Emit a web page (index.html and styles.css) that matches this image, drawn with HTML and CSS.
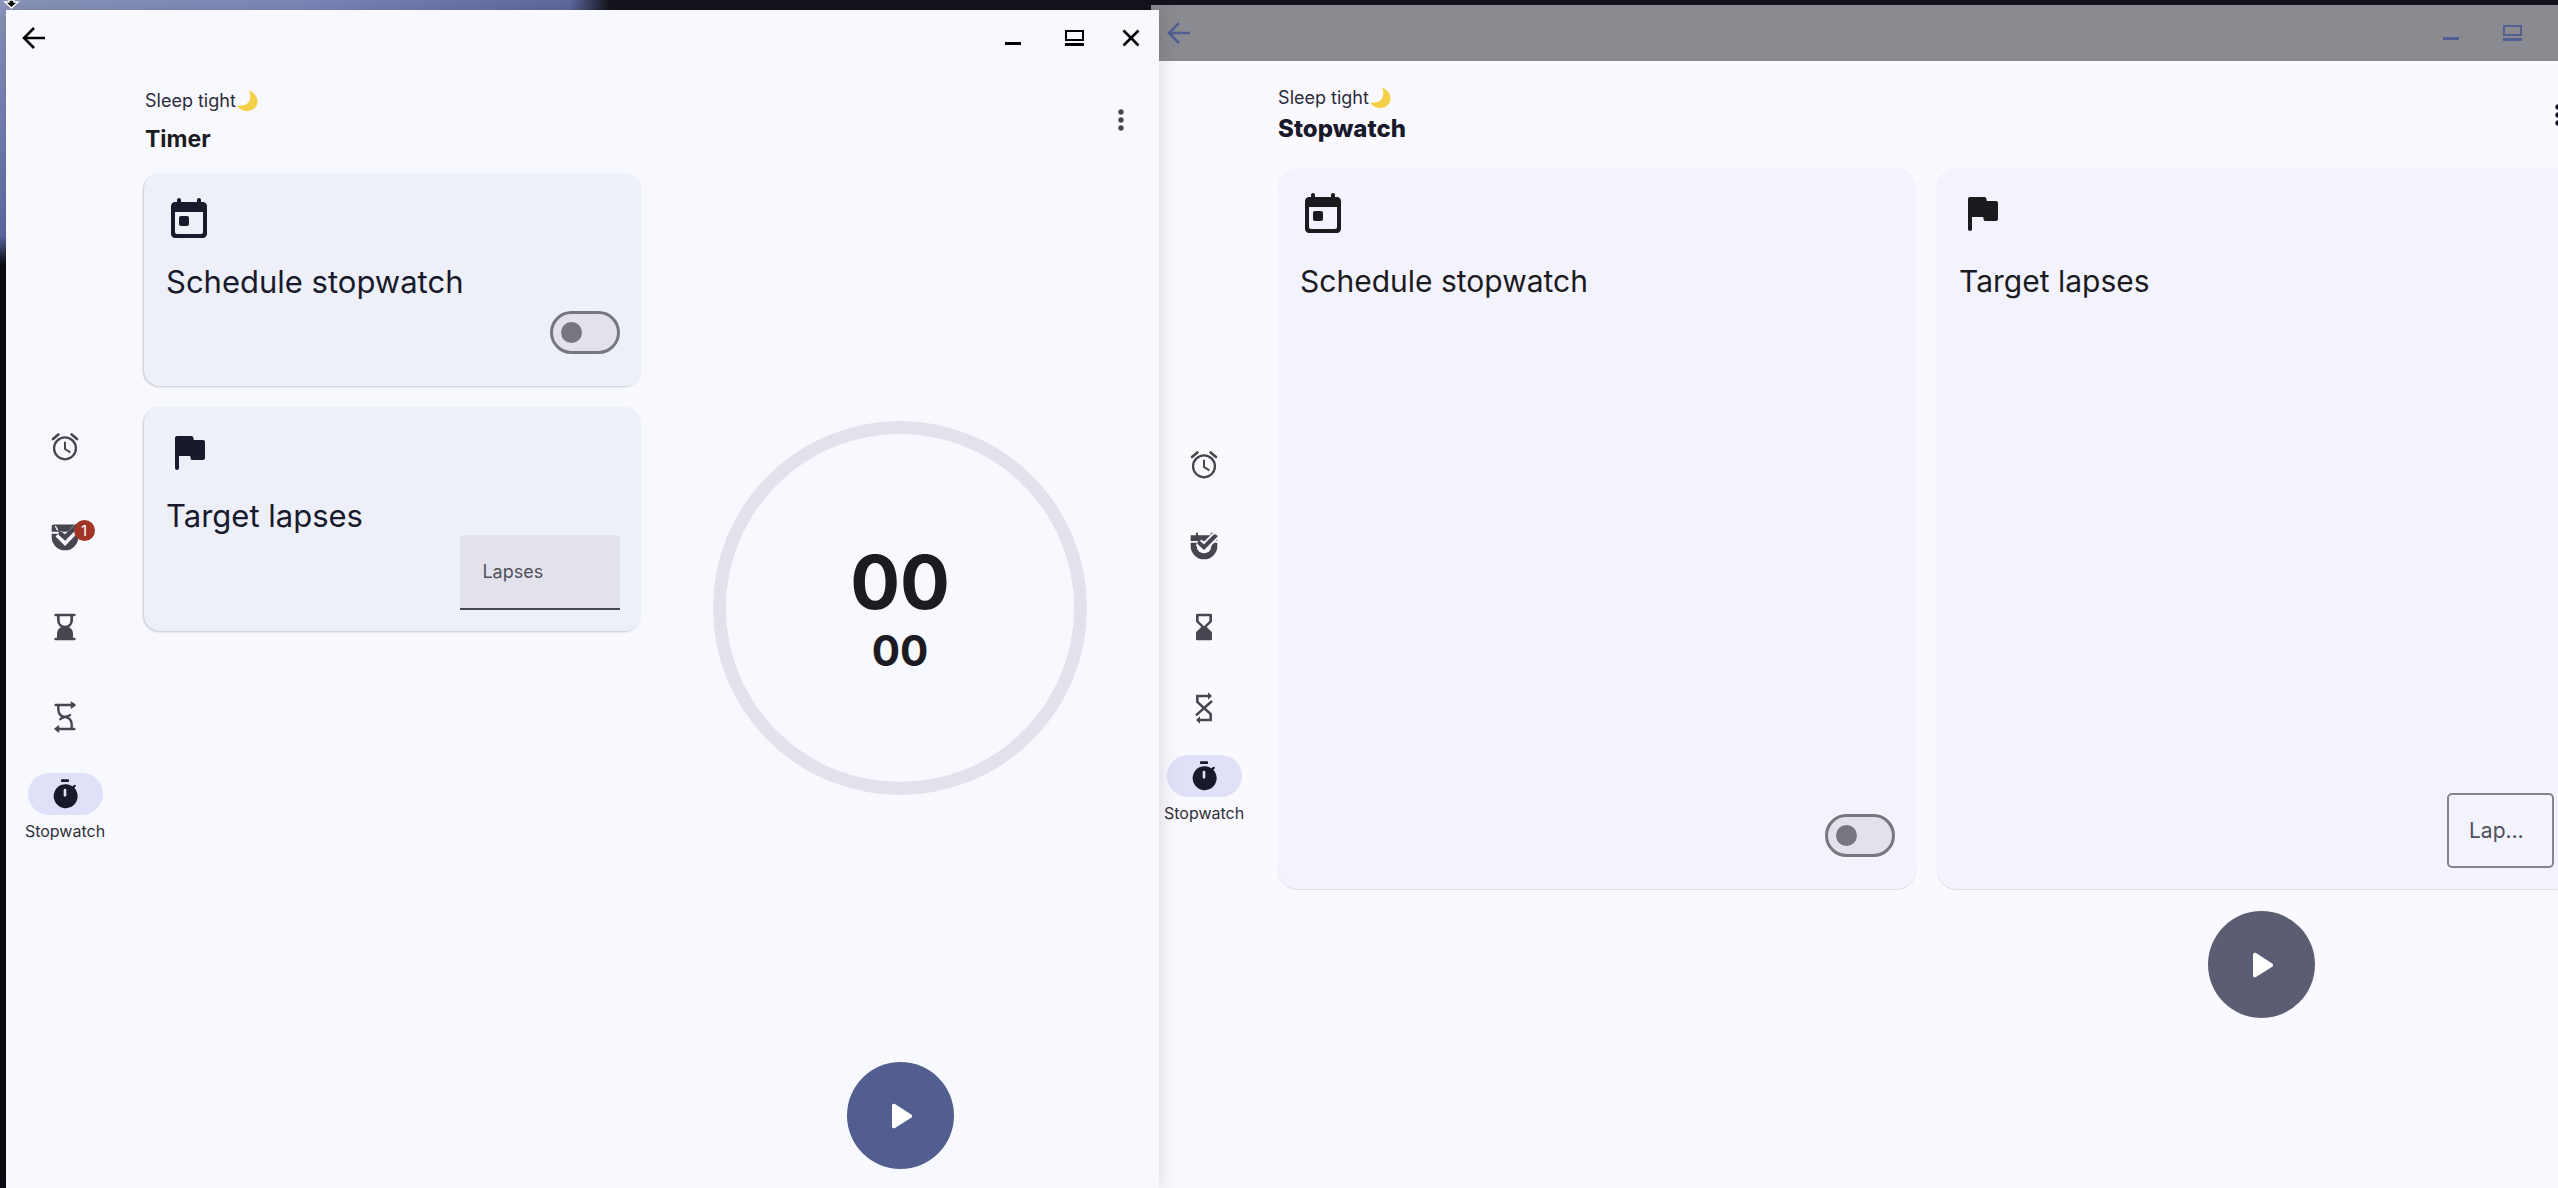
FILE: index.html
```html
<!DOCTYPE html>
<html lang="en">
<head>
    <meta charset="UTF-8">
    <meta name="viewport" content="width=device-width, initial-scale=1.0">
    <title>Stopwatch</title>
    <link rel="stylesheet" href="styles.css">
</head>
<body>
    <!-- Shared icons -->
    <svg class="icon-defs" aria-hidden="true">
        <symbol id="i-back" viewBox="0 0 24 24"><path d="M23 12H3M12 2L2 12l10 10" fill="none" stroke="currentColor" stroke-width="2.6"/></symbol>
        <symbol id="i-min" viewBox="0 0 24 24"><path d="M4 16h16v3H4z"/></symbol>
        <symbol id="i-max" viewBox="0 0 24 24"><path d="M5 4h19v11H5zM7 6v7h15V6zM5 17h19v3H5z" fill-rule="evenodd"/></symbol>
        <symbol id="i-close" viewBox="0 0 24 24"><path d="M4.500 4.500l15 15M19.500 4.500l-15 15" fill="none" stroke="currentColor" stroke-width="2.600"/></symbol>
        <symbol id="i-more" viewBox="0 0 24 24"><circle cx="12" cy="6" r="2"/><circle cx="12" cy="12" r="2"/><circle cx="12" cy="18" r="2"/></symbol>
        <symbol id="i-moon" viewBox="0 0 22 22"><path d="M13 .5c5.500 2 8.500 6.500 8.500 11 0 5.500-4.500 9.500-10 9.500-5 0-9-2.500-10.500-6 3.500 1.300 8 .8 10.800-2C14.800 10 15 5 13 .5z" fill="#f5cf45"/></symbol>
        <symbol id="i-event" viewBox="0 0 24 24"><path d="M19 4h-1V3c0-.55-.45-1-1-1s-1 .45-1 1v1H8V3c0-.55-.45-1-1-1s-1 .45-1 1v1H5c-1.100 0-2 .9-2 2v14c0 1.100.9 2 2 2h14c1.100 0 2-.9 2-2V6c0-1.100-.9-2-2-2zm-1 16H6c-.55 0-1-.45-1-1V9h14v10c0 .55-.45 1-1 1z"/><rect x="7" y="11" width="5" height="5" rx="1"/></symbol>
        <symbol id="i-flag" viewBox="0 0 24 24"><path d="M14.400 6l-.24-1.200c-.09-.46-.5-.8-.98-.8H6c-.55 0-1 .45-1 1v15c0 .55.45 1 1 1s1-.45 1-1v-6h5.600l.24 1.200c.09.47.5.8.98.8H19c.55 0 1-.45 1-1V7c0-.55-.45-1-1-1h-4.600z"/></symbol>
        <symbol id="i-alarm" viewBox="0 0 24 24"><g fill="none" stroke="currentColor"><circle cx="12" cy="13" r="8.200" stroke-width="1.700"/><path d="M12 8v5.500l4 2.500" stroke-width="1.500"/><path d="M3 6l4-3.400M21 6l-4-3.400" stroke-width="2" stroke-linecap="round"/></g></symbol>
        <symbol id="i-check-round" viewBox="0 0 24 24">
            <path d="M2 8V4.500Q2 2.700 4 2.700h16q2 0 2 1.800V8zM2 9.500h20V12a10 10 0 0 1-20 0z"/>
            <g fill="none"><path d="M7 9.500l5 5L21 5" class="cut"/><path d="M4.800 3.800l1.700 3.200" class="notch"/><path d="M8.700 9.500l3.300 3L20 4.500" stroke="currentColor" stroke-width="3.400" stroke-linecap="round"/></g>
        </symbol>
        <symbol id="i-check-ring" viewBox="0 0 24 24">
            <path d="M6 4V2h1.500v2H17V2h1.500v2H22v4.200H2V4zM2 9.500h20V12a10 10 0 0 1-20 0z"/>
            <path d="M6.500 9.500h11V12a5.500 5.500 0 0 1-11 0z" class="hole"/>
            <g fill="none"><path d="M8 9.300l4 3.700 8.500-8.500" class="cut"/><path d="M8.500 9.700l3.500 3.200 8.200-8.200" stroke="currentColor" stroke-width="3" stroke-linecap="round"/></g>
        </symbol>
        <symbol id="i-glass-round" viewBox="0 0 24 24"><g fill="none" stroke="currentColor" stroke-width="2"><path d="M5 3h14M5 21h14" stroke-linecap="round"/><path d="M7 3v4c0 3 2.200 5 5 5s5-2 5-5V3"/></g><path d="M6 21v-4c0-3.500 3-5.500 6-5.500s6 2 6 5.500v4z"/></symbol>
        <symbol id="i-glass" viewBox="0 0 24 24"><path d="M18 21v-5l-4-4 4-4V3q0-1-1-1H7Q6 2 6 3v5l4 4-4 4v5q0 1 1 1h10q1 0 1-1zM8 7.500V4h8v3.500l-4 4-4-4z"/></symbol>
        <symbol id="i-loop-round" viewBox="0 0 24 24"><g fill="none" stroke="currentColor" stroke-width="1.800" stroke-linecap="round"><path d="M5 3h13M19 21H6M7 3v3.500c0 3 2.200 5.500 5 5.500s5 2.500 5 5.500V21M8.500 13.600C10 12 14 12 15.700 10.600"/></g><path d="M16.300.6Q16.300 0 17 .5l2.800 2q.5.5 0 1L17 5.700q-.7.3-.7-.4zM7.700 18.600q0-.7-.7-.2l-2.800 2q-.5.500 0 1L7 23.600q.7.300.7-.4z"/></symbol>
        <symbol id="i-loop" viewBox="0 0 24 24"><path d="M16 3H7v4.500l10 9V21H8M18 6.800L6 17.500" fill="none" stroke="currentColor" stroke-width="1.900"/><path d="M15 .2L18 3l-3 2.800zM9 18.200L6 21l3 2.800z"/></symbol>
        <symbol id="i-timer" viewBox="0 0 24 24"><rect x="9" y="1" width="6" height="2" rx=".5"/><path d="M19 7.400l1-1.100q.3-.6-.2-1-.5-.4-1-.1l-1.200 1A9 9 0 1 0 19 7.400zM13 13q0 1-1 1t-1-1V9q0-1 1-1t1 1z"/></symbol>
        <symbol id="i-play" viewBox="0 0 24 24"><path d="M8 6.800v10.400c0 .8.900 1.200 1.500.8l8.100-5.100c.6-.4.600-1.300 0-1.700L9.500 6c-.6-.4-1.500 0-1.500.8z"/></symbol>
    </svg>

    <div class="desktop">
        <section class="window window-back">
            <header class="titlebar">
                <button class="title-btn" aria-label="Back"><svg><use href="#i-back"/></svg></button>
                <div class="title-actions">
                    <button class="title-btn" aria-label="Minimize"><svg><use href="#i-min"/></svg></button>
                    <button class="title-btn" aria-label="Maximize"><svg><use href="#i-max"/></svg></button>
                </div>
            </header>
            <div class="window-body">
                <nav class="rail">
                    <a href="#" class="rail-item" aria-label="Alarm"><span class="pill"><svg><use href="#i-alarm"/></svg></span></a>
                    <a href="#" class="rail-item" aria-label="Tasks"><span class="pill"><svg><use href="#i-check-ring"/></svg></span></a>
                    <a href="#" class="rail-item" aria-label="Timer"><span class="pill"><svg><use href="#i-glass"/></svg></span></a>
                    <a href="#" class="rail-item" aria-label="Interval"><span class="pill"><svg><use href="#i-loop"/></svg></span></a>
                    <a href="#" class="rail-item active"><span class="pill"><svg><use href="#i-timer"/></svg></span>Stopwatch</a>
                </nav>
                <main class="content">
                    <div class="page-head">
                        <div class="page-titles">
                            <p class="greeting">Sleep tight<svg class="moon"><use href="#i-moon"/></svg></p>
                            <h1>Stopwatch</h1>
                        </div>
                        <button class="more" aria-label="More options"><svg><use href="#i-more"/></svg></button>
                    </div>
                    <div class="cards">
                        <div class="card">
                            <svg class="card-icon"><use href="#i-event"/></svg>
                            <label class="card-title" for="backSchedule">Schedule stopwatch</label>
                            <input type="checkbox" class="switch" id="backSchedule">
                        </div>
                        <div class="card">
                            <svg class="card-icon"><use href="#i-flag"/></svg>
                            <label class="card-title" for="backLapses">Target lapses</label>
                            <input type="text" class="field outlined" id="backLapses" placeholder="Lapses">
                        </div>
                    </div>
                    <div class="play-row">
                        <button class="play" aria-label="Start"><svg><use href="#i-play"/></svg></button>
                    </div>
                </main>
            </div>
        </section>

        <section class="window window-front">
            <header class="titlebar">
                <button class="title-btn" aria-label="Back"><svg><use href="#i-back"/></svg></button>
                <div class="title-actions">
                    <button class="title-btn" aria-label="Minimize"><svg><use href="#i-min"/></svg></button>
                    <button class="title-btn" aria-label="Maximize"><svg><use href="#i-max"/></svg></button>
                    <button class="title-btn" aria-label="Close"><svg><use href="#i-close"/></svg></button>
                </div>
            </header>
            <div class="window-body">
                <nav class="rail">
                    <a href="#" class="rail-item" aria-label="Alarm"><span class="pill"><svg><use href="#i-alarm"/></svg></span></a>
                    <a href="#" class="rail-item" aria-label="Tasks"><span class="pill"><svg><use href="#i-check-round"/></svg><span class="badge">1</span></span></a>
                    <a href="#" class="rail-item" aria-label="Timer"><span class="pill"><svg><use href="#i-glass-round"/></svg></span></a>
                    <a href="#" class="rail-item" aria-label="Interval"><span class="pill"><svg><use href="#i-loop-round"/></svg></span></a>
                    <a href="#" class="rail-item active"><span class="pill"><svg><use href="#i-timer"/></svg></span>Stopwatch</a>
                </nav>
                <main class="content">
                    <div class="page-head">
                        <div class="page-titles">
                            <p class="greeting">Sleep tight<svg class="moon"><use href="#i-moon"/></svg></p>
                            <h1>Timer</h1>
                        </div>
                        <button class="more" aria-label="More options"><svg><use href="#i-more"/></svg></button>
                    </div>
                    <div class="panes">
                        <div class="cards">
                            <div class="card">
                                <svg class="card-icon"><use href="#i-event"/></svg>
                                <label class="card-title" for="schedule">Schedule stopwatch</label>
                                <input type="checkbox" class="switch" id="schedule">
                            </div>
                            <div class="card">
                                <svg class="card-icon"><use href="#i-flag"/></svg>
                                <label class="card-title" for="lapses">Target lapses</label>
                                <input type="text" class="field filled" id="lapses" placeholder="Lapses">
                            </div>
                        </div>
                        <div class="clock-pane">
                            <div class="clock-area">
                                <div class="clock">
                                    <span class="seconds">00</span>
                                    <span class="hundredths">00</span>
                                </div>
                            </div>
                            <button class="play" aria-label="Start"><svg><use href="#i-play"/></svg></button>
                        </div>
                    </div>
                </main>
            </div>
        </section>

        <svg class="cursor" viewBox="0 0 20 10" aria-hidden="true"><path d="M9 0h5v2h4l-6.500 6L5 2h4z" stroke="#fff" stroke-width="1.500"/></svg>
    </div>
</body>
</html>
```
FILE: styles.css
```css
* {
    box-sizing: border-box;
}

body {
    margin: 0;
    font-family: Inter, Roboto, sans-serif;
    color: #1b1b21;
}

button {
    padding: 0;
    border: none;
    background: none;
    color: inherit;
    cursor: pointer;
}

svg {
    display: block;
    fill: currentColor;
}

.icon-defs {
    position: absolute;
    width: 0;
    height: 0;
}

/* Wallpaper, only visible round the windows */
.desktop {
    position: relative;
    height: 100vh;
    overflow: hidden;
    background:
        linear-gradient(180deg, #8b95bb 0, #7482b4 120px, #5d6ca4 236px, #0c0c14 264px) no-repeat 0 0 / 6px 100%,
        linear-gradient(90deg, #8b95bb 0, #7d8abb 300px, #5f6ba0 570px, #14131c 610px);
}

.cursor {
    position: absolute;
    top: 0;
    left: 0;
    width: 20px;
    height: 10px;
    fill: #000;
}

/* Windows */
.window {
    position: absolute;
    display: flex;
    flex-direction: column;
}

.window-front {
    --surface: #f8f9ff;
    --card: #eef0f9;
    top: 10px;
    bottom: 0;
    left: 6px;
    right: 54.7%;
    background-color: var(--surface);
    box-shadow: 0 0 20px rgba(0, 0, 0, 0.15);
}

.window-back {
    --surface: #faf9ff;
    --card: #f3f3fd;
    top: 5px;
    bottom: -4px;
    left: 45%;
    right: -38px;
    background-color: var(--surface);
}

.titlebar {
    flex: none;
    display: flex;
    justify-content: space-between;
    align-items: center;
    height: 56px;
    padding: 0 16px;
    color: #000;
}

.window-back .titlebar {
    padding-right: 74px;
    background-color: #8a8b90;
    color: #535e92;
}

.title-actions {
    display: flex;
    gap: 35px;
}

.title-btn svg {
    width: 24px;
    height: 24px;
}

.window-body {
    flex: 1;
    display: flex;
    min-height: 0;
}

/* Navigation rail */
.rail {
    flex: none;
    display: flex;
    flex-direction: column;
    justify-content: center;
    width: 118px;
}

.window-back .rail {
    width: 106px;
}

.rail-item {
    display: flex;
    flex-direction: column;
    justify-content: center;
    align-items: center;
    gap: 6px;
    height: 90px;
    font-size: 16px;
    line-height: 20px;
    color: #46464f;
    text-decoration: none;
}

.window-back .rail-item {
    height: 81px;
}

.rail-item.active {
    color: #303038;
}

.pill {
    position: relative;
    display: flex;
    justify-content: center;
    align-items: center;
    width: 75px;
    height: 42px;
    border-radius: 21px;
}

.pill svg {
    width: 32px;
    height: 32px;
}

.active .pill {
    background-color: #e0e1f9;
    color: #181a2c;
}

.cut {
    stroke: var(--surface);
    stroke-width: 6;
}

.notch {
    stroke: var(--surface);
    stroke-width: 1;
}

.hole {
    fill: var(--surface);
}

.badge {
    position: absolute;
    top: 4px;
    right: 8px;
    width: 21px;
    height: 21px;
    border-radius: 50%;
    background-color: #a13525;
    color: #fff;
    font-size: 15px;
    line-height: 21px;
    text-align: center;
}

/* Page header */
.content {
    flex: 1;
    display: flex;
    flex-direction: column;
    min-width: 0;
}

.page-head {
    flex: none;
    display: flex;
    justify-content: space-between;
    align-items: center;
    height: 107px;
    padding: 0 22px 0 21px;
}

.page-titles {
    display: flex;
    flex-direction: column;
    gap: 10px;
    padding-top: 5px;
}

.window-back .page-titles {
    gap: 3px;
    padding-top: 2px;
}

.greeting {
    display: flex;
    align-items: center;
    margin: 0;
    font-size: 18px;
    line-height: 24px;
    color: #2b2c38;
}

.moon {
    width: 22px;
    height: 22px;
}

h1 {
    margin: 0;
    font-size: 23px;
    line-height: 32px;
    font-weight: 700;
}

.window-back h1 {
    font-size: 24px;
    font-weight: 800;
    color: #181a2c;
}

.more {
    color: #46464f;
}

.window-back .more {
    color: #181a2c;
}

.more svg {
    width: 32px;
    height: 32px;
}

/* Cards */
.panes {
    flex: 1;
    display: grid;
    grid-template-columns: 1fr 1fr;
}

.cards {
    display: flex;
    flex-direction: column;
    gap: 21px;
    padding-left: 20px;
}

.window-back .cards {
    flex: 1;
    flex-direction: row;
    padding: 0 21px;
}

.card {
    display: flex;
    flex-direction: column;
    padding: 21px;
    border-radius: 16px;
    background-color: var(--card);
    box-shadow: -1px 1px 2px rgba(0, 0, 0, 0.2);
    color: #181a2c;
}

.window-back .card {
    flex: 1;
    border-radius: 20px;
    box-shadow: 0 1px 1px rgba(0, 0, 0, 0.12);
    color: #1b1b1f;
}

.card-icon {
    width: 48px;
    height: 48px;
}

.card-title {
    margin: 21px 1px 0;
    font-size: 31px;
    line-height: 38px;
}

.window-back .card-title {
    margin-top: 25px;
    font-size: 30px;
}

.switch {
    appearance: none;
    display: flex;
    align-items: center;
    align-self: flex-end;
    width: 70px;
    height: 43px;
    margin: 10px 0 11px;
    padding: 0 8px;
    border: 3px solid #76767f;
    border-radius: 22px;
    background-color: #e2e2ec;
    cursor: pointer;
}

.switch::before {
    content: "";
    width: 21px;
    height: 21px;
    border-radius: 50%;
    background-color: #76767f;
}

.switch:checked {
    justify-content: flex-end;
    background-color: #525e8f;
}

.window-back .switch,
.window-back .field {
    margin-top: auto;
}

.field {
    align-self: flex-end;
    width: 160px;
    height: 75px;
    padding: 0 22px;
    font-family: inherit;
    font-size: 18px;
    color: inherit;
    outline: none;
    text-overflow: ellipsis;
}

.field::placeholder {
    color: #50505a;
    opacity: 1;
}

.filled {
    border: none;
    border-bottom: 2px solid #46464f;
    border-radius: 5px 5px 0 0;
    background-color: #e2e2ec;
}

.outlined {
    width: 107px;
    padding: 0 20px;
    border: 2px solid #85858f;
    border-radius: 5px;
    background: none;
    font-size: 21px;
}

/* Clock */
.clock-pane {
    display: flex;
    flex-direction: column;
    align-items: center;
    gap: 20px;
    padding-bottom: 19px;
}

.clock-area {
    flex: 1;
    display: flex;
    align-items: center;
}

.clock {
    display: flex;
    flex-direction: column;
    justify-content: center;
    align-items: center;
    width: 374px;
    height: 374px;
    padding-bottom: 4px;
    border: 13px solid #e2e2ec;
    border-radius: 50%;
    font-weight: 700;
}

.seconds {
    font-size: 74px;
    line-height: 90px;
}

.hundredths {
    font-size: 42px;
    line-height: 48px;
}

.play {
    display: flex;
    justify-content: center;
    align-items: center;
    width: 107px;
    height: 107px;
    border-radius: 50%;
    background-color: #525e8f;
    color: #fff;
}

.play svg {
    width: 48px;
    height: 48px;
}

.play-row {
    display: flex;
    justify-content: center;
    margin-left: 50%;
    padding: 22px 0 174px;
}

.window-back .play {
    background-color: #5b5e72;
}
```
